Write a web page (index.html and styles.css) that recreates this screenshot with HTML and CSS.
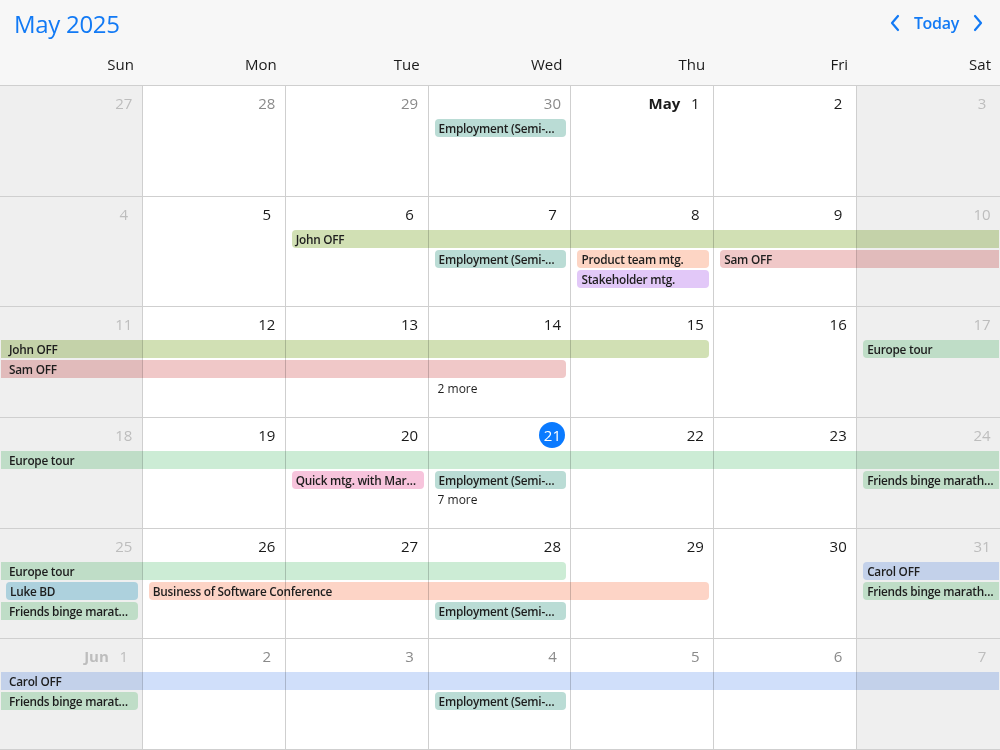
FILE: index.html
```html
<!DOCTYPE html>
<html>
<head>
<meta charset="utf-8">
<link rel="stylesheet" href="styles.css">
</head>
<body>
<div class="cal">
  <header class="head">
    <div class="bar">
      <h1 class="title">May 2025</h1>
      <nav class="nav">
        <svg class="chev" width="12" height="18" viewBox="0 0 12 18"><polyline points="9,2 3,9 9,16" fill="none" stroke="#127af5" stroke-width="2.2" stroke-linecap="round" stroke-linejoin="round"/></svg>
        <span class="today">Today</span>
        <svg class="chev" width="12" height="18" viewBox="0 0 12 18"><polyline points="3,2 9,9 3,16" fill="none" stroke="#127af5" stroke-width="2.2" stroke-linecap="round" stroke-linejoin="round"/></svg>
      </nav>
    </div>
    <div class="dows">
      <div>Sun</div><div>Mon</div><div>Tue</div><div>Wed</div><div>Thu</div><div>Fri</div><div>Sat</div>
    </div>
  </header>
  <main class="weeks">
    <section class="week">
      <div class="cell wk" style="grid-column:1"><div class="dn"><span class="num">27</span></div></div>
      <div class="cell oth" style="grid-column:2"><div class="dn"><span class="num">28</span></div></div>
      <div class="cell oth" style="grid-column:3"><div class="dn"><span class="num">29</span></div></div>
      <div class="cell oth" style="grid-column:4"><div class="dn"><span class="num">30</span></div></div>
      <div class="cell" style="grid-column:5"><div class="dn"><b class="mon">May</b><span class="num">1</span></div></div>
      <div class="cell" style="grid-column:6"><div class="dn"><span class="num">2</span></div></div>
      <div class="cell wk last" style="grid-column:7"><div class="dn"><span class="num">3</span></div></div>
      <div class="ev s e c-emp" style="grid-column:4;grid-row:2">Employment (Semi-monthly)</div>
    </section>
    <section class="week">
      <div class="cell wk" style="grid-column:1"><div class="dn"><span class="num">4</span></div></div>
      <div class="cell" style="grid-column:2"><div class="dn"><span class="num">5</span></div></div>
      <div class="cell" style="grid-column:3"><div class="dn"><span class="num">6</span></div></div>
      <div class="cell" style="grid-column:4"><div class="dn"><span class="num">7</span></div></div>
      <div class="cell" style="grid-column:5"><div class="dn"><span class="num">8</span></div></div>
      <div class="cell" style="grid-column:6"><div class="dn"><span class="num">9</span></div></div>
      <div class="cell wk last" style="grid-column:7"><div class="dn"><span class="num">10</span></div></div>
      <div class="ev s c-john" style="grid-column:3/8;grid-row:2">John OFF</div>
      <div class="ev s e c-emp" style="grid-column:4;grid-row:3">Employment (Semi-monthly)</div>
      <div class="ev s e c-prod" style="grid-column:5;grid-row:3">Product team mtg.</div>
      <div class="ev s c-sam" style="grid-column:6/8;grid-row:3">Sam OFF</div>
      <div class="ev s e c-stake" style="grid-column:5;grid-row:4">Stakeholder mtg.</div>
    </section>
    <section class="week">
      <div class="cell wk" style="grid-column:1"><div class="dn"><span class="num">11</span></div></div>
      <div class="cell" style="grid-column:2"><div class="dn"><span class="num">12</span></div></div>
      <div class="cell" style="grid-column:3"><div class="dn"><span class="num">13</span></div></div>
      <div class="cell" style="grid-column:4"><div class="dn"><span class="num">14</span></div></div>
      <div class="cell" style="grid-column:5"><div class="dn"><span class="num">15</span></div></div>
      <div class="cell" style="grid-column:6"><div class="dn"><span class="num">16</span></div></div>
      <div class="cell wk last" style="grid-column:7"><div class="dn"><span class="num">17</span></div></div>
      <div class="ev e c-john" style="grid-column:1/6;grid-row:2">John OFF</div>
      <div class="ev s c-eu" style="grid-column:7;grid-row:2">Europe tour</div>
      <div class="ev e c-sam" style="grid-column:1/5;grid-row:3">Sam OFF</div>
      <div class="more" style="grid-column:4;grid-row:4">2 more</div>
    </section>
    <section class="week">
      <div class="cell wk" style="grid-column:1"><div class="dn"><span class="num">18</span></div></div>
      <div class="cell" style="grid-column:2"><div class="dn"><span class="num">19</span></div></div>
      <div class="cell" style="grid-column:3"><div class="dn"><span class="num">20</span></div></div>
      <div class="cell" style="grid-column:4"><div class="dn"><span class="num today-num">21</span></div></div>
      <div class="cell" style="grid-column:5"><div class="dn"><span class="num">22</span></div></div>
      <div class="cell" style="grid-column:6"><div class="dn"><span class="num">23</span></div></div>
      <div class="cell wk last" style="grid-column:7"><div class="dn"><span class="num">24</span></div></div>
      <div class="ev c-eu" style="grid-column:1/8;grid-row:2">Europe tour</div>
      <div class="ev s e c-quick" style="grid-column:3;grid-row:3">Quick mtg. with Marketing</div>
      <div class="ev s e c-emp" style="grid-column:4;grid-row:3">Employment (Semi-monthly)</div>
      <div class="ev s c-fr" style="grid-column:7;grid-row:3">Friends binge marathon</div>
      <div class="more" style="grid-column:4;grid-row:4">7 more</div>
    </section>
    <section class="week">
      <div class="cell wk" style="grid-column:1"><div class="dn"><span class="num">25</span></div></div>
      <div class="cell" style="grid-column:2"><div class="dn"><span class="num">26</span></div></div>
      <div class="cell" style="grid-column:3"><div class="dn"><span class="num">27</span></div></div>
      <div class="cell" style="grid-column:4"><div class="dn"><span class="num">28</span></div></div>
      <div class="cell" style="grid-column:5"><div class="dn"><span class="num">29</span></div></div>
      <div class="cell" style="grid-column:6"><div class="dn"><span class="num">30</span></div></div>
      <div class="cell wk last" style="grid-column:7"><div class="dn"><span class="num">31</span></div></div>
      <div class="ev e c-eu" style="grid-column:1/5;grid-row:2">Europe tour</div>
      <div class="ev s c-carol" style="grid-column:7;grid-row:2">Carol OFF</div>
      <div class="ev s e c-luke" style="grid-column:1;grid-row:3">Luke BD</div>
      <div class="ev s e c-bos" style="grid-column:2/6;grid-row:3">Business of Software Conference</div>
      <div class="ev s c-fr" style="grid-column:7;grid-row:3">Friends binge marathon</div>
      <div class="ev e c-fr" style="grid-column:1;grid-row:4">Friends binge marathon</div>
      <div class="ev s e c-emp" style="grid-column:4;grid-row:4">Employment (Semi-monthly)</div>
    </section>
    <section class="week">
      <div class="cell wk" style="grid-column:1"><div class="dn"><b class="mon">Jun</b><span class="num">1</span></div></div>
      <div class="cell oth" style="grid-column:2"><div class="dn"><span class="num">2</span></div></div>
      <div class="cell oth" style="grid-column:3"><div class="dn"><span class="num">3</span></div></div>
      <div class="cell oth" style="grid-column:4"><div class="dn"><span class="num">4</span></div></div>
      <div class="cell oth" style="grid-column:5"><div class="dn"><span class="num">5</span></div></div>
      <div class="cell oth" style="grid-column:6"><div class="dn"><span class="num">6</span></div></div>
      <div class="cell wk last" style="grid-column:7"><div class="dn"><span class="num">7</span></div></div>
      <div class="ev c-carol" style="grid-column:1/8;grid-row:2">Carol OFF</div>
      <div class="ev e c-fr" style="grid-column:1;grid-row:3">Friends binge marathon</div>
      <div class="ev s e c-emp" style="grid-column:4;grid-row:3">Employment (Semi-monthly)</div>
    </section>
  </main>
</div>
</body>
</html>
```
FILE: styles.css
```css
html, body {
  margin: 0;
  padding: 0;
  width: 1000px;
  height: 750px;
  overflow: hidden;
  background: #fff;
}
body {
  font-family: "Open Sans", "Noto Sans", sans-serif;
  color: #1a1a1a;
}
.cal {
  display: flex;
  flex-direction: column;
  height: 750px;
}
.head {
  background: #f7f7f7;
  border-bottom: 1px solid #cfcfcf;
  height: 86px;
  box-sizing: border-box;
  display: flex;
  flex-direction: column;
  flex: none;
}
.bar {
  display: flex;
  align-items: center;
  justify-content: space-between;
  height: 46px;
  padding: 0 16px 0 14px;
}
.title {
  margin: 0;
  font-size: 24px;
  font-weight: 400;
  color: #127af5;
  letter-spacing: -0.3px;
}
.nav {
  display: flex;
  align-items: center;
  gap: 13px;
}
.today {
  font-size: 16px;
  font-weight: 600;
  color: #127af5;
  letter-spacing: -0.3px;
}
.chev { display: block; }
.dows {
  display: grid;
  grid-template-columns: repeat(7, 1fr);
  font-size: 15px;
  color: #1a1a1a;
  padding-top: 8px;
}
.dows div {
  text-align: right;
  padding-right: 9px;
}
.weeks {
  flex: 1;
  display: flex;
  flex-direction: column;
  min-height: 0;
}
.week {
  flex: 1;
  display: grid;
  grid-template-columns: repeat(7, 1fr);
  grid-template-rows: 33px 20px 20px 20px 1fr;
  border-bottom: 1px solid #cfcfcf;
  min-height: 0;
}
.cell {
  grid-row: 1 / -1;
  border-right: 1px solid #cfcfcf;
  background: #fff;
}
.cell.last { border-right: none; }
.cell.wk { background: #efefef; }
.dn {
  display: flex;
  justify-content: flex-end;
  align-items: center;
  margin-top: 4px;
  padding-right: 5px;
  height: 26px;
  font-size: 15px;
  color: #1a1a1a;
}
.cell.oth .dn { color: #8a8a8a; }
.cell.wk .dn { color: #bdbdbd; }
.mon {
  font-weight: 700;
  margin-right: 2px;
}
.num {
  display: inline-block;
  min-width: 26px;
  height: 26px;
  line-height: 26px;
  text-align: center;
}
.today-num {
  background: #0a7aff;
  color: #fff;
  border-radius: 50%;
}
.ev {
  height: 18px;
  line-height: 18px;
  font-size: 11.8px;
  letter-spacing: -0.25px;
  font-weight: 600;
  color: #1e1e1e;
  white-space: nowrap;
  overflow: hidden;
  text-overflow: ellipsis;
  margin: 0 1px;
  padding-left: 8px;
  padding-right: 4px;
  mix-blend-mode: multiply;
  min-width: 0;
}
.ev.s {
  margin-left: 6px;
  padding-left: 4px;
  border-top-left-radius: 4px;
  border-bottom-left-radius: 4px;
}
.ev.e {
  margin-right: 5px;
  border-top-right-radius: 4px;
  border-bottom-right-radius: 4px;
}
.more {
  font-size: 12px;
  line-height: 18px;
  padding-left: 9px;
  color: #1e1e1e;
}
.c-emp { background: #badcd5; }
.c-john { background: #d1e0b4; }
.c-prod { background: #fdd5c4; }
.c-stake { background: #e2c8f8; }
.c-sam { background: #f0c8c8; }
.c-eu { background: #ccecd5; }
.c-fr { background: #ccecd5; }
.c-quick { background: #f7c4dc; }
.c-luke { background: #b9dfec; }
.c-bos { background: #fdd4c6; }
.c-carol { background: #d0dffa; }
```
